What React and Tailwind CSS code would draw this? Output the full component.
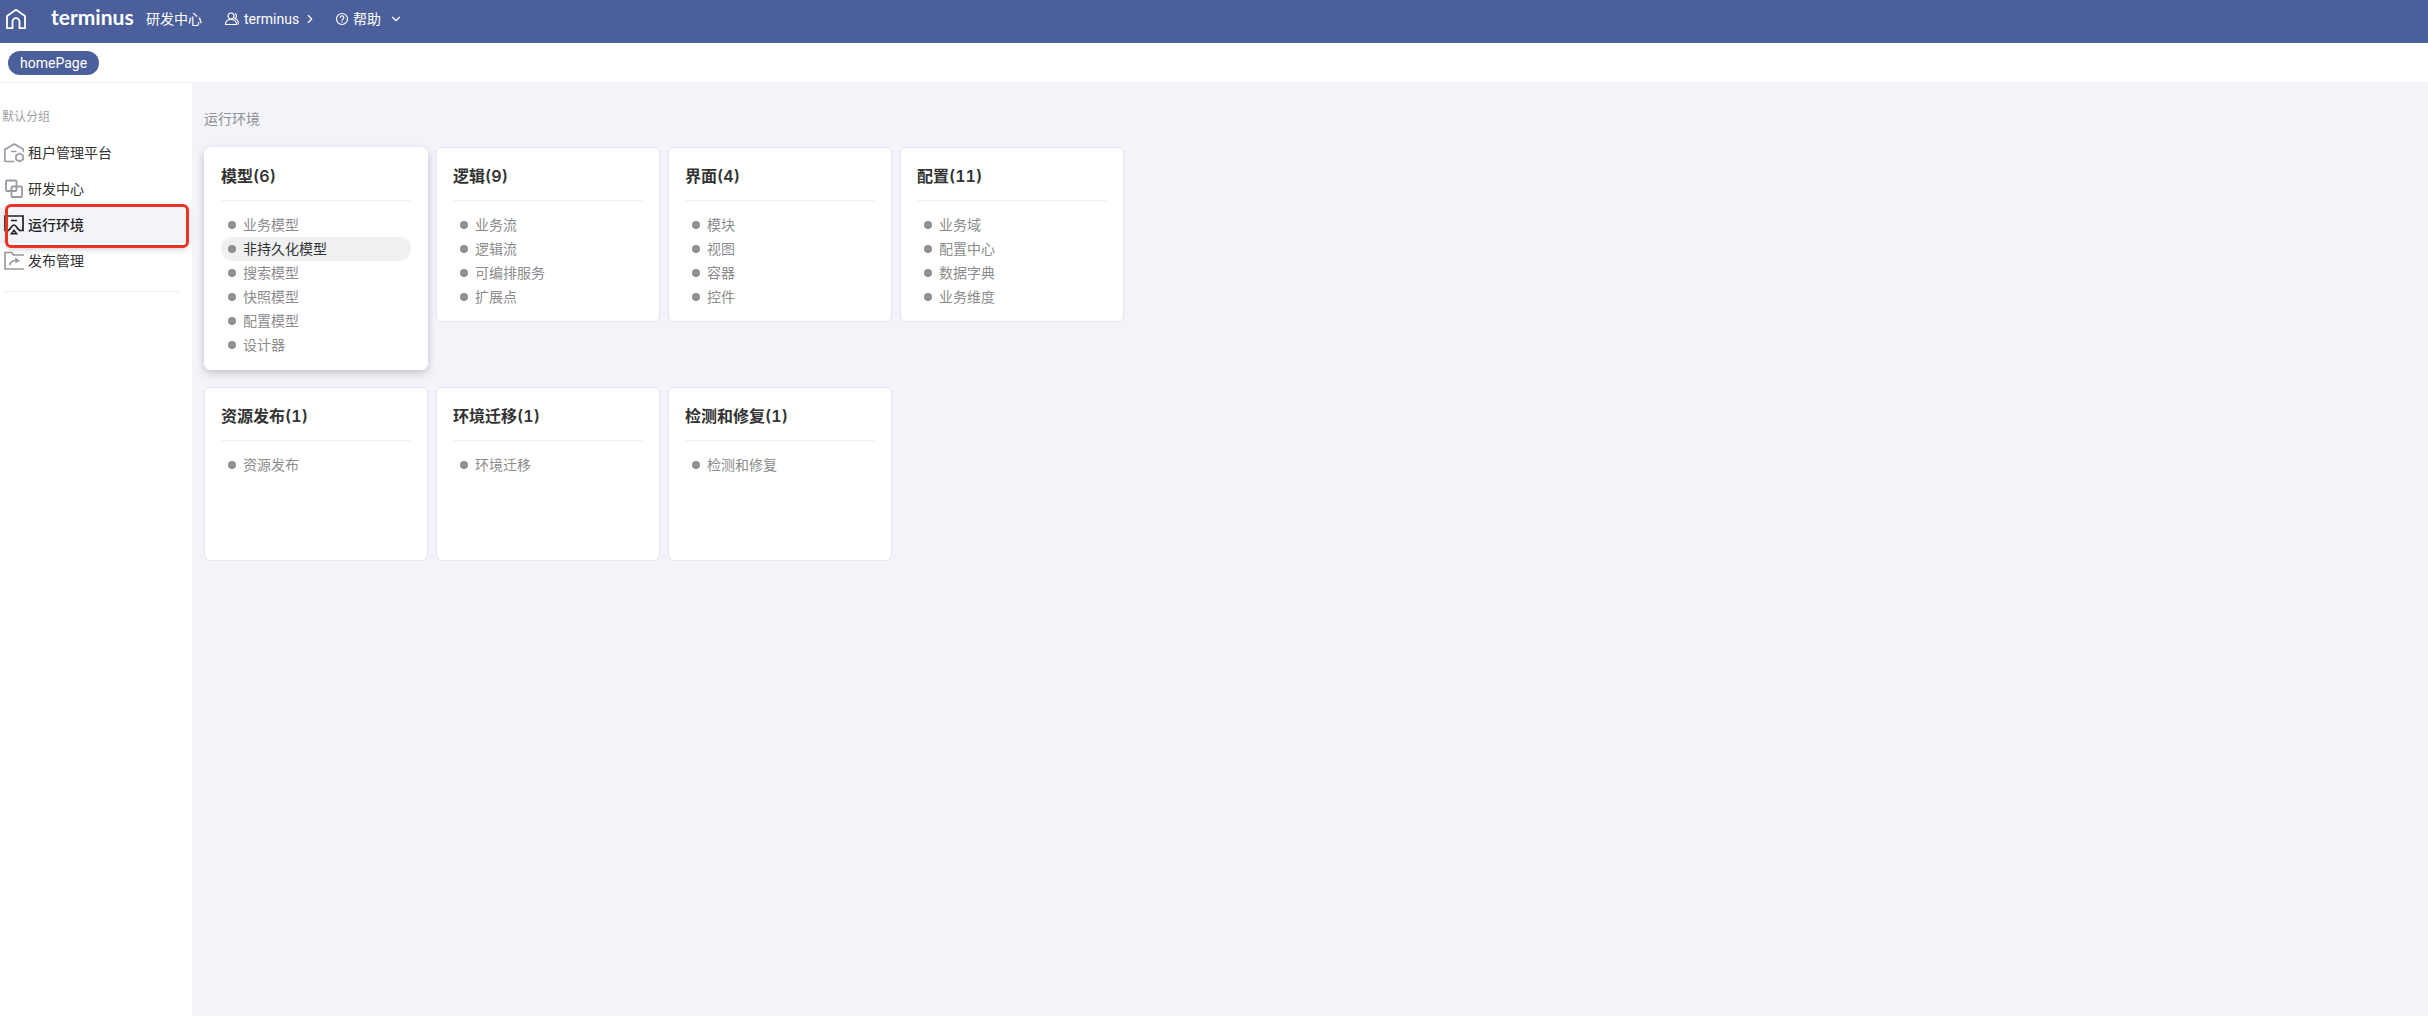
import { ChevronDown, ChevronRight } from "lucide-react";

const cards = [
  { title: '模型', count: 6, items: ['业务模型', '非持久化模型', '搜索模型', '快照模型', '配置模型', '设计器'], raised: true, active: '非持久化模型' },
  { title: '逻辑', count: 9, items: ['业务流', '逻辑流', '可编排服务', '扩展点'] },
  { title: '界面', count: 4, items: ['模块', '视图', '容器', '控件'] },
  { title: '配置', count: 11, items: ['业务域', '配置中心', '数据字典', '业务维度'] },
  { title: '资源发布', count: 1, items: ['资源发布'] },
  { title: '环境迁移', count: 1, items: ['环境迁移'] },
  { title: '检测和修复', count: 1, items: ['检测和修复'] },
]

const TenantIcon = () => (
  <svg viewBox="0 0 20 20" className="size-5" fill="none" stroke="currentColor" strokeWidth="1.7">
    <path d="M10.500 18.500H2a1.200 1.200 0 0 1-1.200-1.200V6.500L10.300 1l8.900 5.300v2.500M7 8.500h5.500" />
    <path d="M15.500 10.500l3.500 2v4l-3.500 2-3.500-2v-4z" />
  </svg>
)

const DevIcon = () => (
  <svg viewBox="0 0 20 20" className="size-5" fill="none" stroke="currentColor" strokeWidth="1.8">
    <rect x="2" y="1.500" width="10.500" height="10.500" rx="1" />
    <rect x="7.500" y="7.500" width="10.500" height="10.500" rx="1" />
  </svg>
)

const RuntimeIcon = () => (
  <svg viewBox="0 0 20 20" className="size-5" fill="none" stroke="currentColor" strokeWidth="1.7">
    <path d="M5 15.500H1V1h18v14.500h-4M7 5.500h6" />
    <path d="M4 15.500c2.500-.5 3.500-5.500 6-5.500s3.500 5 6 5.500" />
    <path d="M10 15.200l2.600 3.500H7.400z" strokeWidth="1.5" />
  </svg>
)

const ReleaseIcon = () => (
  <svg viewBox="0 0 20 20" className="size-5" fill="none" stroke="currentColor" strokeWidth="1.7">
    <path d="M20 18H1V1.500h6.500l2 2.500H20" />
    <path d="M5.500 14c.8-3.200 3-4.500 6.500-4.500" />
    <path d="M11 6.500l5 3-4.500 3z" fill="currentColor" stroke="none" />
  </svg>
)

const menu = [
  { name: '租户管理平台', Icon: TenantIcon },
  { name: '研发中心', Icon: DevIcon },
  { name: '运行环境', Icon: RuntimeIcon, active: true },
  { name: '发布管理', Icon: ReleaseIcon },
]

function Header() {
  return (
    <header className="flex h-[43px] items-center bg-[#4b5f9b] pb-[6px] text-sm text-white">
      <a href="#home" aria-label="home" className="ml-[5px]">
        <svg viewBox="0 0 22 22" className="size-[22px]" fill="none" stroke="currentColor" strokeWidth="1.8" strokeLinejoin="round">
          <path d="M2 8L11 1.800 20 8v12.200h-5.500v-6.500a3.500 3.500 0 0 0-7 0v6.500H2z" />
        </svg>
      </a>
      <a href="#home" className="ml-6 w-[84px] pb-1 font-['Lato',sans-serif] text-[21px] leading-6 font-bold">terminus</a>
      <a href="#dev" className="ml-[11px]">研发中心</a>
      <button className="ml-[22px] flex items-center gap-1">
        <svg viewBox="0 0 16 14" className="h-[14px] w-4" fill="none" stroke="currentColor" strokeWidth="1.2">
          <circle cx="7" cy="4" r="3" />
          <path d="M1.500 12.500c0-3.500 2-5 5.500-5s5.500 1.500 5.500 5zM11 1.500c2 1 2 4 0 5 2.500.8 3.500 3 3.500 6" />
        </svg>
        terminus
        <ChevronRight size={14} />
      </button>
      <button className="ml-[18px] flex items-center gap-1">
        <svg viewBox="0 0 14 14" className="size-[14px]" fill="none" stroke="currentColor" strokeWidth="1.2">
          <circle cx="7" cy="7" r="5.500" />
          <path d="M5.200 5.800a1.800 1.800 0 1 1 2.400 1.600c-.4.200-.6.500-.6 1.100M7 9.300v1.100" />
        </svg>
        帮助
        <ChevronDown size={14} className="ml-1" />
      </button>
    </header>
  )
}

function Sidebar() {
  return (
    <aside className="w-48 shrink-0 bg-white">
      <div className="mt-6 pl-[2px] text-xs leading-5 text-[#a0a1a6]">默认分组</div>
      <nav className="mt-2">
        {menu.map(({ name, Icon, active }) => (
          <a
            key={name}
            href={`#${name}`}
            className={`relative flex h-9 items-center gap-1 pl-1 text-sm ${active ? 'z-10 bg-[#f3f4f9] font-medium text-[#222]' : 'text-[#333]'}`}
          >
            <span className={active ? 'text-[#222]' : 'text-[#999ba3]'}><Icon /></span>
            {name}
            {active && <span className="absolute -top-[3px] right-[3px] -bottom-[5px] left-[5px] rounded-md border-[3px] border-[#ea3323] shadow-md" />}
          </a>
        ))}
      </nav>
      <div className="mr-3 ml-1 mt-3 border-t border-[#f0f0f0]" />
    </aside>
  )
}

function Card({ title, count, items, raised, active }) {
  return (
    <section className={`min-h-[174px] rounded-md border bg-white px-4 pt-4 pb-3 ${raised ? 'border-white shadow-[0_3px_8px_rgba(0,0,0,0.2)]' : 'border-[#e6e6e8]'}`}>
      <h2 className="border-b border-[#f0f0f0] pb-3 font-['Inter','Noto_Sans_CJK_SC',sans-serif] text-base leading-6 font-semibold tabular-nums text-[#333]">
        {title}({count})
      </h2>
      <ul className="mt-3">
        {items.map(item => (
          <li key={item}>
            <a
              href={`#${item}`}
              className={`flex h-6 items-center gap-[7px] rounded-full pl-[7px] text-sm ${item === active ? 'bg-[#eff0f2] text-[#333]' : 'text-[#8c8c8c]'}`}
            >
              <span className="size-2 rounded-full bg-[#8f8f8f]" />
              {item}
            </a>
          </li>
        ))}
      </ul>
    </section>
  )
}

function App() {
  return (
    <div className="flex min-h-screen flex-col bg-white font-['Roboto','Noto_Sans_CJK_SC',sans-serif]">
      <Header />
      <div className="flex h-10 items-center border-b border-[#f0f1f4] px-2">
        <button className="h-6 rounded-full bg-[#4b5f9b] px-3 text-sm text-white">homePage</button>
      </div>
      <div className="flex grow">
        <Sidebar />
        <main className="grow bg-[#f3f4f9] px-3 pt-6">
          <h1 className="text-sm leading-6 text-[#8f9096]">运行环境</h1>
          <div className="mt-4 grid grid-cols-[repeat(4,224px)] items-start gap-x-2 gap-y-[17px]">
            {cards.map(card => <Card key={card.title} {...card} />)}
          </div>
        </main>
      </div>
    </div>
  )
}

export default App;
